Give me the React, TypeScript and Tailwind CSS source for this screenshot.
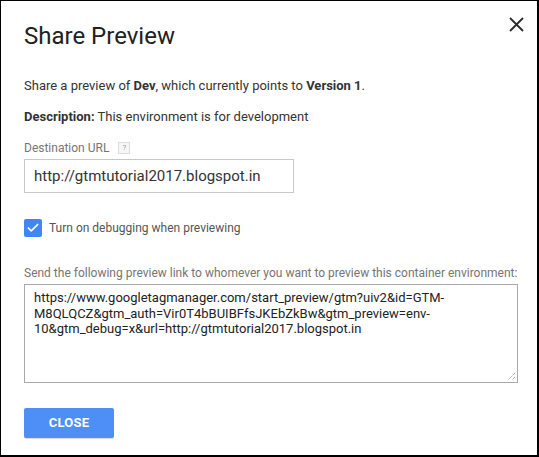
import { Check } from "lucide-react";

export default function App() {
  return (
    <div className="w-[539px] h-[457px] bg-white border-l border-t border-r-2 border-b-2 border-black font-['Roboto',sans-serif] text-[#212121] relative">
      {/* Close icon */}
      <button className="absolute right-[13px] top-[15px] w-4 h-4 flex items-center justify-center" aria-label="Close">
        <svg width="15" height="15" viewBox="0 0 15 15">
          <path d="M1 1 L14 14 M14 1 L1 14" stroke="#2b2b2b" strokeWidth="1.8" />
        </svg>
      </button>

      <div className="pl-[23px] pr-[20px] pt-[19px]">
        <h1 className="text-[24px] leading-[32px] text-[#212121]">Share Preview</h1>

        <p className="mt-[25px] text-[13px] leading-[18px] text-[#333]">
          Share a preview of <b className="font-bold">Dev</b>, which currently points to <b className="font-bold">Version 1</b>.
        </p>
        <p className="mt-[13px] text-[13px] leading-[18px] text-[#333]">
          <b className="font-bold">Description:</b> This environment is for development
        </p>

        {/* Destination URL */}
        <div className="mt-[14px] flex items-center gap-[9px] text-[12px] leading-[16px] text-[#757575]">
          <span>Destination URL</span>
          <span className="w-[12px] h-[12px] border border-[#ddd] bg-[#f7f7f7] text-[8px] leading-[10px] text-[#999] flex items-center justify-center">?</span>
        </div>
        <div className="mt-[3px] w-[270px] h-[34px] border border-[#c8c8c8] flex items-center pl-[9px] text-[15px] text-[#333]">
          http://gtmtutorial2017.blogspot.in
        </div>

        {/* Checkbox */}
        <div className="mt-[26px] flex items-center gap-[7px]">
          <span className="w-[18px] h-[18px] rounded-[2px] bg-[#4285f4] flex items-center justify-center">
            <Check size={14} color="white" strokeWidth={3} />
          </span>
          <span className="text-[12px] leading-[16px] text-[#555]">Turn on debugging when previewing</span>
        </div>

        {/* Preview link */}
        <p className="mt-[28px] text-[12px] leading-[16px] text-[#757575] whitespace-nowrap">
          Send the following preview link to whomever you want to preview this container environment:
        </p>
        <div className="mt-[3px] w-[494px] h-[99px] border border-[#a9a9a9] pl-[9px] pt-[5px] pr-[10px] text-[13px] leading-[15.5px] text-[#222] relative">
          <div>https://www.googletagmanager.com/start_preview/gtm?uiv2&amp;id=GTM-</div>
          <div>M8QLQCZ&amp;gtm_auth=Vir0T4bBUIBFfsJKEbZkBw&amp;gtm_preview=env-</div>
          <div>10&amp;gtm_debug=x&amp;url=http://gtmtutorial2017.blogspot.in</div>
          <svg className="absolute right-[1px] bottom-[1px]" width="10" height="10" viewBox="0 0 10 10">
            <path d="M9 2 L2 9 M9 6 L6 9" stroke="#888" strokeWidth="1" strokeDasharray="1 1" />
          </svg>
        </div>

        <button className="mt-[25px] w-[90px] h-[30px] rounded-[2px] bg-[#4d8ff5] text-white text-[13px] font-bold tracking-[0.2px] shadow-[0_1px_1px_rgba(0,0,0,0.15)]">
          CLOSE
        </button>
      </div>
    </div>
  );
}
